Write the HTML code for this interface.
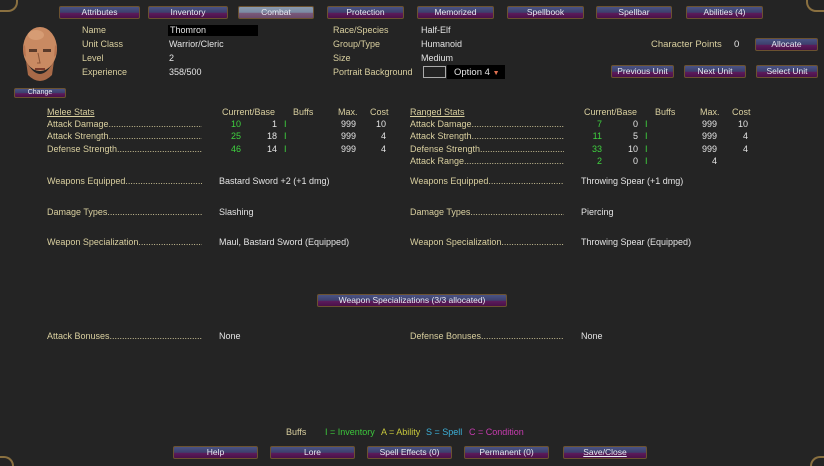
<!DOCTYPE html>
<html><head><meta charset="utf-8"><style>
*{margin:0;padding:0;box-sizing:border-box}
body{width:824px;height:466px;background:#242424;font-family:"Liberation Sans",sans-serif;font-size:9px;color:#e6e6e6;position:relative;overflow:hidden}
.a{position:absolute;white-space:nowrap;line-height:10px}
.l{color:#d9cf9f}
.w{color:#e4e4e4}
.g{color:#3fd23f}
.b{position:absolute;height:13px;border:1px solid #6b5230;border-radius:2px;background:linear-gradient(#4a5384 0%,#3c3f6c 50%,#5c1c5c 55%,#4a1048 100%);color:#e8e8f0;text-align:center;line-height:11px;font-size:8.5px}
.b.sel{background:linear-gradient(#8a9ab0 0%,#7a8aa2 50%,#7a5a7a 55%,#6a4a6a 100%)}
.lead{position:absolute;overflow:hidden;white-space:nowrap;color:#d9cf9f;line-height:10px}
.r{text-align:right}
.u{text-decoration:underline}
</style></head><body>

<div class="b" style="left:59px;top:6px;width:81px">Attributes</div>
<div class="b" style="left:148px;top:6px;width:80px">Inventory</div>
<div class="b sel" style="left:238px;top:6px;width:76px">Combat</div>
<div class="b" style="left:327px;top:6px;width:77px">Protection</div>
<div class="b" style="left:417px;top:6px;width:77px">Memorized</div>
<div class="b" style="left:507px;top:6px;width:77px">Spellbook</div>
<div class="b" style="left:596px;top:6px;width:76px">Spellbar</div>
<div class="b" style="left:686px;top:6px;width:77px">Abilities (4)</div>

<svg style="position:absolute;left:16px;top:25px" width="48" height="62" viewBox="0 0 48 62">
<ellipse cx="24" cy="24" rx="17" ry="22" fill="#c98a62"/>
<path d="M8 30 Q6 22 9 20 L10 32Z M40 30 Q42 22 39 20 L38 32Z" fill="#b87450"/>
<path d="M10 36 Q24 62 38 36 L36 50 Q24 62 12 50Z" fill="#a86a48"/>
<rect x="13" y="24" width="8" height="3" fill="#5a3a2a"/><rect x="27" y="24" width="8" height="3" fill="#5a3a2a"/>
<path d="M22 28 L24 38 L21 38" stroke="#8a5438" fill="none"/>
<rect x="19" y="43" width="10" height="2" fill="#7a3a2a"/>
<ellipse cx="20" cy="10" rx="8" ry="5" fill="#e0a880" opacity=".6"/>
</svg>
<div class="b" style="left:14px;top:88px;width:52px;height:10px;line-height:8px;font-size:7px">Change</div>

<div class="a l" style="left:82px;top:25px">Name</div>
<div class="a l" style="left:82px;top:39px">Unit Class</div>
<div class="a l" style="left:82px;top:53px">Level</div>
<div class="a l" style="left:82px;top:67px">Experience</div>
<div style="position:absolute;left:168px;top:25px;width:90px;height:11px;background:#000"></div>
<div class="a w" style="left:170px;top:25px">Thomron</div>
<div class="a w" style="left:169px;top:39px">Warrior/Cleric</div>
<div class="a w" style="left:169px;top:53px">2</div>
<div class="a w" style="left:169px;top:67px">358/500</div>

<div class="a l" style="left:333px;top:25px">Race/Species</div>
<div class="a l" style="left:333px;top:39px">Group/Type</div>
<div class="a l" style="left:333px;top:53px">Size</div>
<div class="a l" style="left:333px;top:67px">Portrait Background</div>
<div class="a w" style="left:421px;top:25px">Half-Elf</div>
<div class="a w" style="left:421px;top:39px">Humanoid</div>
<div class="a w" style="left:421px;top:53px">Medium</div>
<div style="position:absolute;left:423px;top:66px;width:23px;height:12px;border:1px solid #aaa;background:#222"></div>
<div style="position:absolute;left:447px;top:65px;width:58px;height:14px;background:#000"></div>
<div class="a w" style="left:454px;top:68px;font-size:9.5px">Option 4 <span style="color:#e07050;font-size:7px">▼</span></div>

<div class="a l" style="left:651px;top:40px;font-size:9.5px">Character Points</div>
<div class="a w" style="left:734px;top:40px;font-size:9.5px">0</div>
<div class="b" style="left:755px;top:38px;width:63px">Allocate</div>
<div class="b" style="left:611px;top:65px;width:63px">Previous Unit</div>
<div class="b" style="left:684px;top:65px;width:62px">Next Unit</div>
<div class="b" style="left:756px;top:65px;width:62px">Select Unit</div>

<div class="a l u" style="left:47px;top:107px">Melee Stats</div>
<div class="a l" style="left:222px;top:107px">Current/Base</div>
<div class="a l" style="left:293px;top:107px">Buffs</div>
<div class="a l" style="left:338px;top:107px">Max.</div>
<div class="a l" style="left:370px;top:107px">Cost</div>
<div class="lead" style="left:47px;top:119px;width:155px">Attack Damage.................................................................</div>
<div class="lead" style="left:47px;top:131px;width:155px">Attack Strength.................................................................</div>
<div class="lead" style="left:47px;top:144px;width:155px">Defense Strength.................................................................</div>
<div class="a g r" style="left:220px;top:119px;width:21px">10</div>
<div class="a g r" style="left:220px;top:131px;width:21px">25</div>
<div class="a g r" style="left:220px;top:144px;width:21px">46</div>
<div class="a w r" style="left:256px;top:119px;width:21px">1</div>
<div class="a w r" style="left:256px;top:131px;width:21px">18</div>
<div class="a w r" style="left:256px;top:144px;width:21px">14</div>
<div class="a g" style="left:284px;top:119px">I</div><div class="a g" style="left:284px;top:131px">I</div><div class="a g" style="left:284px;top:144px">I</div>
<div class="a w r" style="left:330px;top:119px;width:26px">999</div>
<div class="a w r" style="left:330px;top:131px;width:26px">999</div>
<div class="a w r" style="left:330px;top:144px;width:26px">999</div>
<div class="a w r" style="left:366px;top:119px;width:20px">10</div>
<div class="a w r" style="left:366px;top:131px;width:20px">4</div>
<div class="a w r" style="left:366px;top:144px;width:20px">4</div>

<div class="a l u" style="left:410px;top:107px">Ranged Stats</div>
<div class="a l" style="left:584px;top:107px">Current/Base</div>
<div class="a l" style="left:655px;top:107px">Buffs</div>
<div class="a l" style="left:700px;top:107px">Max.</div>
<div class="a l" style="left:732px;top:107px">Cost</div>
<div class="lead" style="left:410px;top:119px;width:154px">Attack Damage.................................................................</div>
<div class="lead" style="left:410px;top:131px;width:154px">Attack Strength.................................................................</div>
<div class="lead" style="left:410px;top:144px;width:154px">Defense Strength.................................................................</div>
<div class="lead" style="left:410px;top:156px;width:154px">Attack Range.................................................................</div>
<div class="a g r" style="left:582px;top:119px;width:20px">7</div>
<div class="a g r" style="left:582px;top:131px;width:20px">11</div>
<div class="a g r" style="left:582px;top:144px;width:20px">33</div>
<div class="a g r" style="left:582px;top:156px;width:20px">2</div>
<div class="a w r" style="left:618px;top:119px;width:20px">0</div>
<div class="a w r" style="left:618px;top:131px;width:20px">5</div>
<div class="a w r" style="left:618px;top:144px;width:20px">10</div>
<div class="a w r" style="left:618px;top:156px;width:20px">0</div>
<div class="a g" style="left:645px;top:119px">I</div><div class="a g" style="left:645px;top:131px">I</div><div class="a g" style="left:645px;top:144px">I</div><div class="a g" style="left:645px;top:156px">I</div>
<div class="a w r" style="left:691px;top:119px;width:26px">999</div>
<div class="a w r" style="left:691px;top:131px;width:26px">999</div>
<div class="a w r" style="left:691px;top:144px;width:26px">999</div>
<div class="a w r" style="left:691px;top:156px;width:26px">4</div>
<div class="a w r" style="left:728px;top:119px;width:20px">10</div>
<div class="a w r" style="left:728px;top:131px;width:20px">4</div>
<div class="a w r" style="left:728px;top:144px;width:20px">4</div>

<div class="lead" style="left:47px;top:176px;width:155px">Weapons Equipped.................................................................</div>
<div class="lead" style="left:47px;top:207px;width:155px">Damage Types.................................................................</div>
<div class="lead" style="left:47px;top:237px;width:155px">Weapon Specialization.................................................................</div>
<div class="lead" style="left:47px;top:331px;width:155px">Attack Bonuses.................................................................</div>
<div class="a w" style="left:219px;top:176px">Bastard Sword +2 (+1 dmg)</div>
<div class="a w" style="left:219px;top:207px">Slashing</div>
<div class="a w" style="left:219px;top:237px">Maul, Bastard Sword (Equipped)</div>
<div class="a w" style="left:219px;top:331px">None</div>

<div class="lead" style="left:410px;top:176px;width:154px">Weapons Equipped.................................................................</div>
<div class="lead" style="left:410px;top:207px;width:154px">Damage Types.................................................................</div>
<div class="lead" style="left:410px;top:237px;width:154px">Weapon Specialization.................................................................</div>
<div class="lead" style="left:410px;top:331px;width:154px">Defense Bonuses.................................................................</div>
<div class="a w" style="left:581px;top:176px">Throwing Spear (+1 dmg)</div>
<div class="a w" style="left:581px;top:207px">Piercing</div>
<div class="a w" style="left:581px;top:237px">Throwing Spear (Equipped)</div>
<div class="a w" style="left:581px;top:331px">None</div>

<div class="b" style="left:317px;top:294px;width:190px">Weapon Specializations (3/3 allocated)</div>

<div class="a l" style="left:286px;top:427px">Buffs</div>
<div class="a" style="left:325px;top:427px;color:#3cc83c">I = Inventory</div>
<div class="a" style="left:381px;top:427px;color:#c8c83c">A = Ability</div>
<div class="a" style="left:426px;top:427px;color:#3cb0d8">S = Spell</div>
<div class="a" style="left:469px;top:427px;color:#c83cb0">C = Condition</div>

<div class="b" style="left:173px;top:446px;width:85px">Help</div>
<div class="b" style="left:270px;top:446px;width:85px">Lore</div>
<div class="b" style="left:367px;top:446px;width:85px">Spell Effects (0)</div>
<div class="b" style="left:464px;top:446px;width:85px">Permanent (0)</div>
<div class="b" style="left:563px;top:446px;width:84px"><span class="u">Save/Close</span></div>

<div style="position:absolute;left:0;top:0;width:18px;height:12px;border-right:2px solid #8a7040;border-bottom:2px solid #8a7040;border-radius:0 0 10px 0"></div>
<div style="position:absolute;right:0;top:0;width:18px;height:12px;border-left:2px solid #8a7040;border-bottom:2px solid #8a7040;border-radius:0 0 0 10px"></div>
<div style="position:absolute;left:0;bottom:0;width:14px;height:10px;border-right:2px solid #8a7040;border-top:2px solid #8a7040;border-radius:0 10px 0 0"></div>
<div style="position:absolute;right:0;bottom:0;width:14px;height:10px;border-left:2px solid #8a7040;border-top:2px solid #8a7040;border-radius:10px 0 0 0"></div>
</body></html>
